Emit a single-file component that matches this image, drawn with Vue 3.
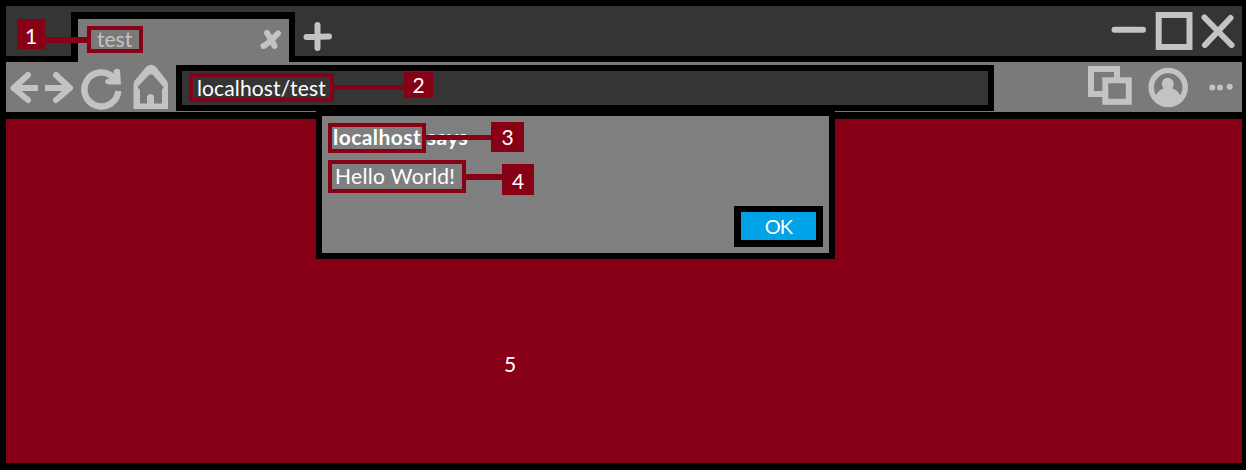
<script setup>
const boxes = ['tab', 'address', 'host', 'message']
const callouts = [1, 2, 3, 4]
</script>

<template>
  <div class="browser">
    <header class="tabs">
      <div class="tab">
        <span class="tab-title">test</span>
        <svg class="tab-close" width="22" height="20" viewBox="0 0 22 20"><path d="M3.500 16C7 15 14 7 18 3.500M7 3C9.500 7 13 12 14.500 16" /></svg>
      </div>
      <svg class="new-tab" width="32" height="32" viewBox="0 0 32 32"><path d="M15.500 4V27M4.500 16L27 15.500" /></svg>
      <svg class="window-controls" width="126" height="40" viewBox="0 0 126 40">
        <path d="M3.500 19.700H32" />
        <rect x="47.700" y="5" width="30.800" height="32" />
        <path d="M93.500 7.500L120.500 35M119.500 8L94 35" />
      </svg>
    </header>

    <nav class="toolbar">
      <svg class="nav-icons" width="170" height="50" viewBox="0 0 170 50">
        <path class="arrow" d="M22 13L7.500 26L22 38M50 13L64 26L50 38" />
        <path class="arrow shaft" d="M32 26H8M39 26H63" />
        <path class="reload" d="M107.500 15.500A17 17 0 1 0 112.300 29" />
        <path class="reload-head" d="M101 17L108 15L107.500 9Q110 5 114 8L115 22.500H102Q96.500 20 101 17Z" />
        <path class="house" fill-rule="evenodd" d="M127.500 47V22L128.500 19L140 5Q145 0.500 150 5L161 19L162 22V47ZM134 41.500H141V34Q144.500 30 148 34V41.500H156V28L157.500 25L147 13Q145 11.500 143 13L131.500 25L134 28Z" />
      </svg>
      <div class="address">localhost/test</div>
      <svg class="toolbar-icons" width="154" height="50" viewBox="0 0 154 50">
        <g class="outline"><rect x="3" y="7" width="26" height="25" /><rect class="front" x="17.300" y="18.300" width="23.500" height="21.500" /></g>
        <circle class="avatar-ring" cx="80.200" cy="25.500" r="17" />
        <g class="glyph">
          <path d="M67 36Q69 28 75.500 26.500V26Q73.800 24 73.800 21.800A6 6 0 0 1 85.800 21.800Q85.800 24 84.500 26V26.500Q91 28 93 36Q80 49 67 36Z" />
          <circle cx="124.300" cy="25.600" r="3" /><circle cx="132" cy="25.600" r="3" /><circle cx="141.700" cy="24.700" r="3" />
        </g>
      </svg>
    </nav>

    <main class="page">
      <section class="dialog">
        <div class="heading">localhost says</div>
        <div class="message">Hello World!</div>
        <button class="ok">OK</button>
      </section>
      <span class="page-number">5</span>
    </main>

    <div v-for="name in boxes" :key="name" class="mark" :class="'mark-' + name"></div>
    <div v-for="n in callouts" :key="'line' + n" class="line" :class="'line-' + n"></div>
    <div v-for="n in callouts" :key="n" class="callout" :class="'callout-' + n">{{ n }}</div>
  </div>
</template>

<style>
body { margin: 0; background: #000; }
</style>

<style scoped>
* { box-sizing: border-box; }
.browser { position: relative; width: 1246px; height: 470px; padding: 6px 4px 7px 6px; background: #000; color: #fff; font: 21px/28px Lato, "Open Sans", sans-serif; overflow: hidden; }
svg { display: block; flex: none; fill: none; stroke: #c3c3c3; stroke-linecap: round; stroke-linejoin: round; }
.tabs { display: flex; height: 56px; background: #353535; border-bottom: 6px solid #000; }
.tab { display: flex; justify-content: space-between; position: relative; width: 224px; height: 50px; margin: 6px 0 0 65px; padding: 6px 7px 0 19px; background: #7a7a7a; border: solid #000; border-width: 7px 6px 0 7px; }
.tab-title { color: #c3c3c3; }
.tab-close { margin-top: 5px; stroke-width: 6; }
.new-tab { margin: 15px 0 0 7px; stroke-width: 6; }
.window-controls { margin: 4px 5px 0 auto; stroke-width: 6; }
.window-controls rect { stroke-linejoin: miter; }
.toolbar { display: flex; height: 50px; background: #7a7a7a; }
.arrow { stroke-width: 6; }
.shaft { stroke-linecap: butt; }
.reload { stroke-width: 6.500; stroke-linecap: butt; }
.reload-head, .house, .glyph { fill: #c3c3c3; stroke: none; }
.address { width: 818px; height: 46px; margin-top: 3px; padding: 3px 15px; background: #353535; border: 6px solid #000; letter-spacing: .13px; }
.toolbar-icons { margin: 0 0 0 auto; }
.outline { stroke-width: 6; stroke-linejoin: miter; }
.front { fill: #7a7a7a; }
.avatar-ring { stroke-width: 5.500; }
.page { height: 351px; border-top: 7px solid #000; background: #880015; }
.dialog { position: absolute; left: 316px; top: 110px; display: flex; flex-direction: column; width: 519px; height: 149px; padding: 7px 6px 6px 11px; background: #7f7f7f; border: 6px solid #000; }
.heading { font-weight: 700; letter-spacing: .44px; }
.message { margin-top: 11px; padding-left: 2px; letter-spacing: .34px; }
.ok { display: flex; align-items: center; justify-content: center; width: 89px; height: 41px; margin: auto 0 0 auto; padding: 0; border: solid #000; border-width: 6px 7px 7px; background: #00a2e8; color: #fff; font: inherit; font-size: 20px; letter-spacing: -.8px; }
.page-number { position: absolute; left: 504px; top: 350px; }
.mark { position: absolute; border: 4px solid #880015; }
.mark-tab { left: 87px; top: 26px; width: 56px; height: 27px; }
.mark-address { left: 189px; top: 73px; width: 145px; height: 29px; }
.mark-host { left: 328px; top: 123px; width: 98px; height: 30px; }
.mark-message { left: 328px; top: 160px; width: 138px; height: 33px; }
.line { position: absolute; height: 5px; background: #880015; }
.line-1 { left: 45px; top: 37px; width: 46px; height: 6px; }
.line-2 { left: 331px; top: 85px; width: 74px; }
.line-3 { left: 424px; top: 135px; width: 68px; height: 5px; }
.line-4 { left: 464px; top: 174px; width: 40px; height: 6px; }
.callout { position: absolute; display: flex; align-items: center; justify-content: center; background: #880015; }
.callout-1 { left: 17px; top: 19px; width: 28px; height: 30px; padding-top: 3px; }
.callout-2 { left: 404px; top: 72px; width: 29px; height: 26px; }
.callout-3 { left: 491px; top: 122px; width: 33px; height: 30px; }
.callout-4 { left: 502px; top: 164px; width: 32px; height: 31px; padding-top: 3px; }
</style>
